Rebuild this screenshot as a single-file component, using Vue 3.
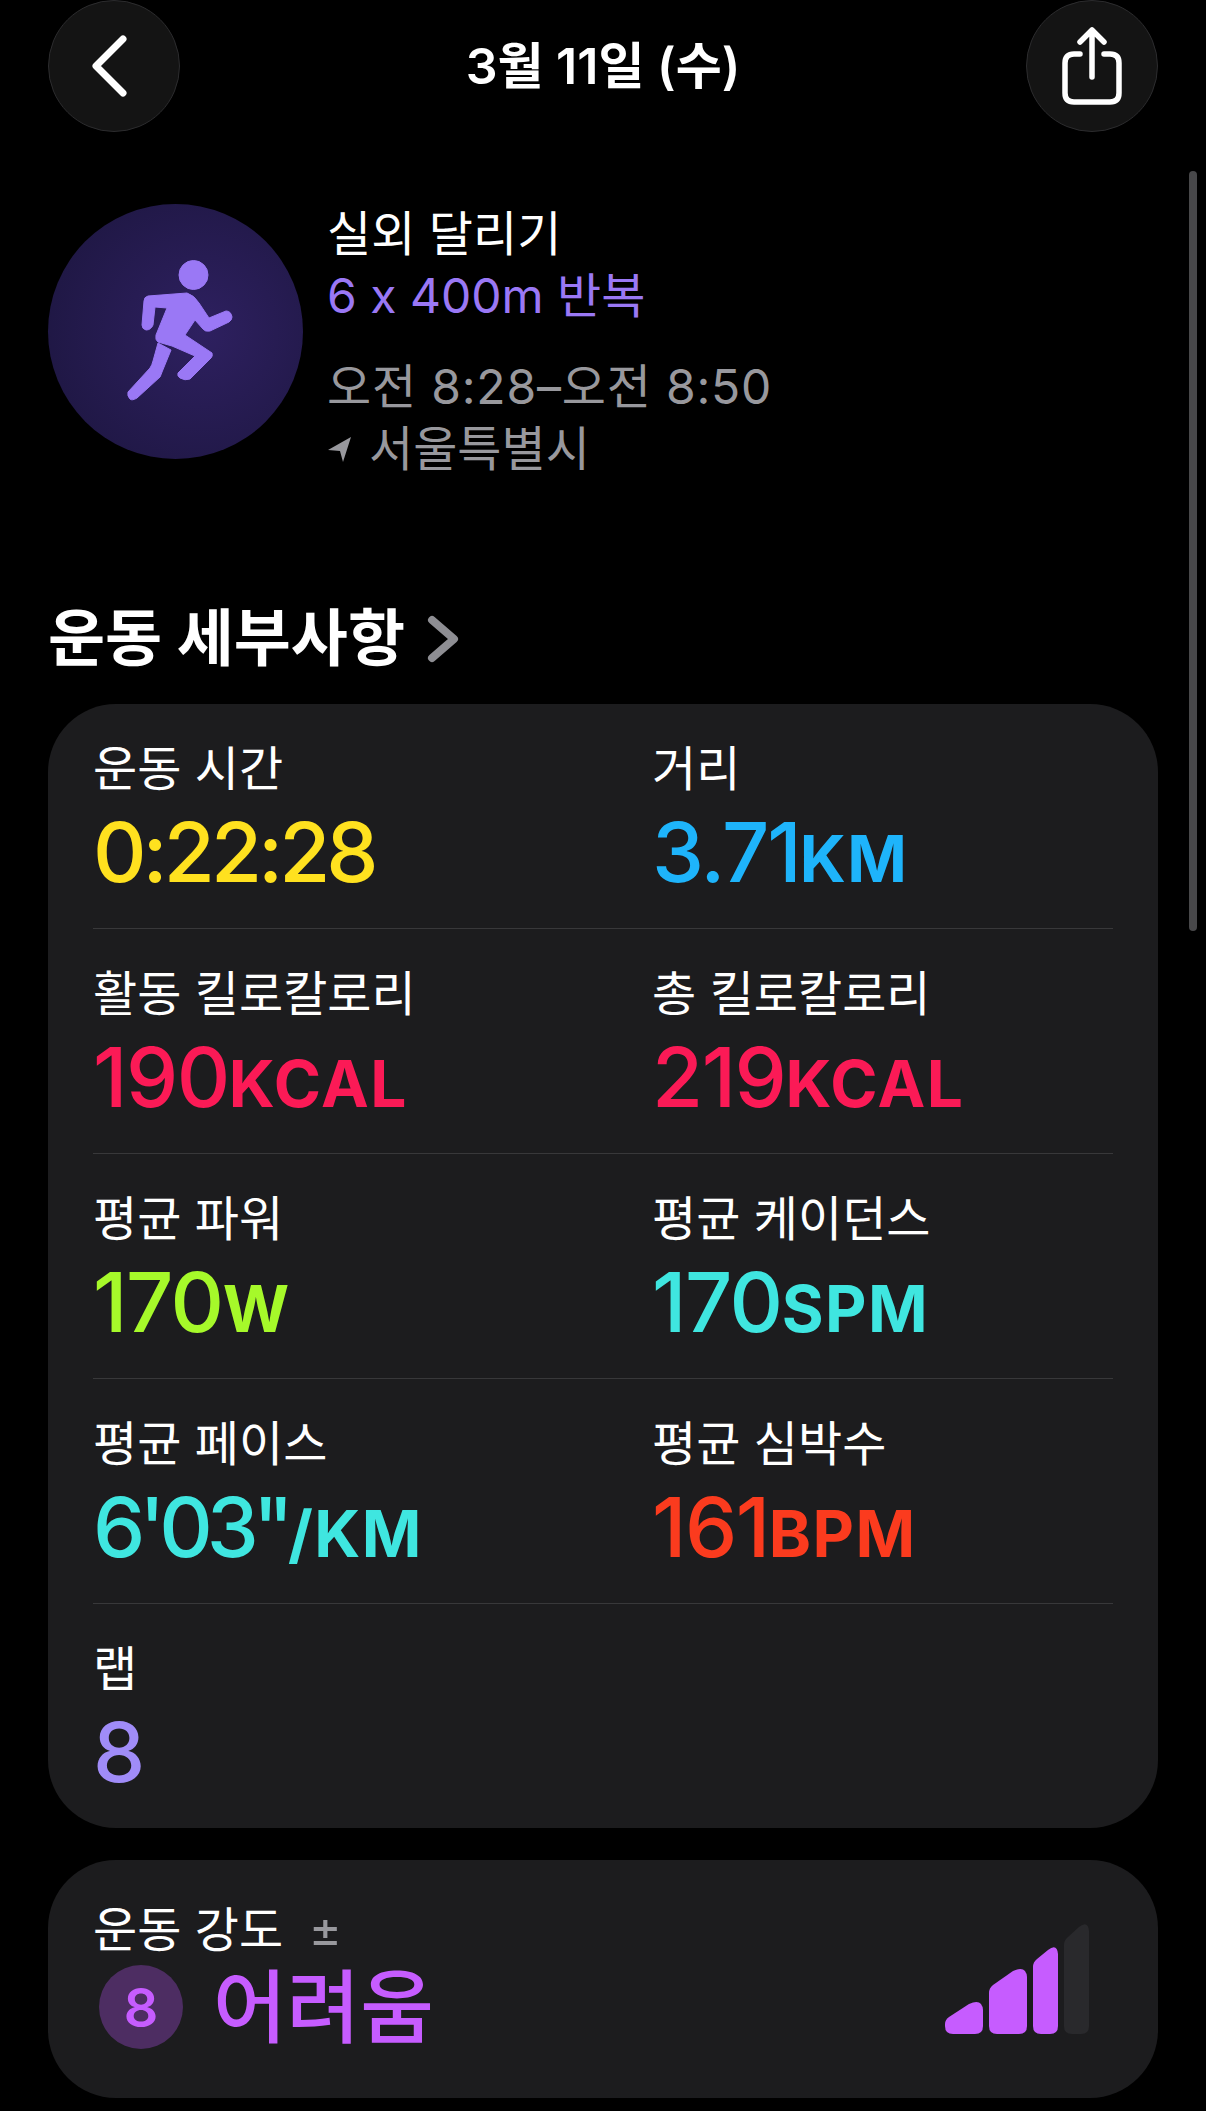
<script setup>
const stats = [
  { label: '운동 시간', value: '0:22:28', unit: '', color: '#ffe11f', tight: -4 },
  { label: '거리', value: '3.71', unit: 'KM', color: '#1eb4fb', tight: -2 },
  { label: '활동 킬로칼로리', value: '190', unit: 'KCAL', color: '#fb1a56', tight: -1.5 },
  { label: '총 킬로칼로리', value: '219', unit: 'KCAL', color: '#fb1a56', tight: -1.5 },
  { label: '평균 파워', value: '170', unit: 'W', color: '#a6f92a', tight: -1.5 },
  { label: '평균 케이던스', value: '170', unit: 'SPM', color: '#3fe6e0', tight: -1.5 },
  { label: '평균 페이스', value: `6'03"`, unit: '/KM', color: '#3fe6e0', tight: -6 },
  { label: '평균 심박수', value: '161', unit: 'BPM', color: '#fb3b1e', tight: -1.5 },
  { label: '랩', value: '8', unit: '', color: '#a08cf8', tight: -1 },
]
</script>

<template>
  <div class="page">
    <header class="nav">
      <button class="round">
        <svg class="back" width="40" height="62" viewBox="0 0 40 62" fill="none" stroke="#fff" stroke-width="7" stroke-linecap="round" stroke-linejoin="round"><path d="M33 4 6 31l27 27" /></svg>
      </button>
      <div class="date">3월 11일 (수)</div>
      <button class="round">
        <svg width="64" height="78" viewBox="0 0 64 78" fill="none" stroke="#fff" stroke-width="5.5" stroke-linecap="round" stroke-linejoin="round"><path d="M32 50V4M20 15 32 3l12 12" /><path d="M20 27h-6q-9 0-9 9v30q0 9 9 9h36q9 0 9-9V36q0-9-9-9h-6" /></svg>
      </button>
    </header>

    <section class="summary">
      <div class="badge">
        <svg width="121" height="153" viewBox="115 255 121 153" fill="#9a78f5" stroke="#9a78f5" stroke-width="1" stroke-linejoin="round">
          <ellipse cx="193.5" cy="275" rx="14.5" ry="14.5" />
          <path d="M148 296 187 293Q194 295 199 303L209 318 226 311Q231 311 232 317 232 320 229 322L210 331Q205 332 203 329L195 320 185 335 212 353Q213 356 211 358L190 379Q185 381 180 378 177 376 178 373L195 356 172 346 158 342Q155 340 156 335L167 308 155 307 153 325Q151 330 146 330 142 329 142 325L144 301Q144 297 148 296Z" />
          <path d="M158 343 171 350 162 372Q161 375 160 377L137 398Q132 401 130 399 127 396 128 392L150 368Q152 365 153 361Z" />
        </svg>
      </div>
      <div class="info">
        <div class="line white">실외 달리기</div>
        <div class="line purple">6 x 400m 반복</div>
        <div class="line gray gap time">오전 8:28–오전 8:50</div>
        <div class="line gray loc">
          <svg width="26" height="28" viewBox="0 0 26 28" fill="#98989d"><path d="M24 2 1 15l12 1 3 11Z" /></svg>
          서울특별시
        </div>
      </div>
    </section>

    <h2 class="heading">
      운동 세부사항
      <svg width="32" height="48" viewBox="0 0 32 48" fill="none" stroke="#8e8e93" stroke-width="8" stroke-linecap="round" stroke-linejoin="round"><path d="M5 5 27 24 5 43" /></svg>
    </h2>

    <section class="card stats">
      <div v-for="s in stats" :key="s.label" class="stat">
        <div class="label">{{ s.label }}</div>
        <div class="value" :style="{ color: s.color, letterSpacing: s.tight + 'px' }">{{ s.value }}<span class="unit">{{ s.unit }}</span></div>
      </div>
    </section>

    <section class="card effort">
      <div>
        <div class="label">운동 강도 <span class="pm">±</span></div>
        <div class="level">
          <span class="num">8</span>
          <span class="word">어려움</span>
        </div>
      </div>
      <svg class="bars" width="144" height="111" viewBox="0 0 144 111">
        <path d="M0 101q0-4 4-7L24 81q13-6 14 6v16q0 8-8 8H8q-8 0-8-8Z" fill="#c65cff" />
        <path d="M44 70q0-5 4-8L68 48q13-6 14 6v49q0 8-8 8H52q-8 0-8-8Z" fill="#c65cff" />
        <path d="M88 44q0-5 4-8L103 27q9-7 10 4v72q0 8-8 8h-9q-8 0-8-8Z" fill="#c65cff" />
        <path d="M119 22q0-5 4-8L134 4q9-7 10 4v95q0 8-8 8h-9q-8 0-8-8Z" fill="#29292c" />
      </svg>
    </section>

    <div class="scrollbar"></div>
  </div>
</template>

<style scoped>
.page {
  position: relative;
  width: 1206px;
  height: 2111px;
  overflow: hidden;
  background: #000;
  color: #fff;
  font-family: Inter, "Noto Sans CJK KR", sans-serif;
  font-feature-settings: "calt" 0;
  box-sizing: border-box;
  padding: 0 48px;
}
.nav { display: flex; align-items: center; justify-content: space-between; height: 132px; }
.round {
  width: 132px;
  height: 132px;
  border-radius: 50%;
  border: 1.5px solid #2c2c2e;
  background: #141414;
  display: grid;
  place-items: center;
  padding: 0;
}
.back { margin-right: 8px; }
.date { font-size: 50px; font-weight: 600; margin-bottom: 8px; }
.summary { display: flex; gap: 24px; margin-top: 72px; height: 268px; }
.badge {
  width: 255px;
  height: 255px;
  border-radius: 50%;
  background: radial-gradient(circle at 60% 50%, #2e2060, #201846 75%, #1a1538);
  display: grid;
  place-items: center;
  flex: none;
}
.info { font-size: 48px; margin-top: -1px; }
.line { height: 62px; line-height: 62px; white-space: nowrap; }
.white { color: #fff; }
.purple { color: #9a78f5; }
.gray { color: #98989d; }
.gap { margin-top: 29px; }
.time { letter-spacing: .8px; }
.loc { display: flex; align-items: center; gap: 16px; }
.heading {
  margin: 0;
  margin-top: 131px;
  height: 72px;
  display: flex;
  align-items: center;
  gap: 22px;
  font-size: 62px;
  font-weight: 700;
  line-height: 72px;
}
.card { background: #1c1c1e; border-radius: 68px; width: 1110px; box-sizing: border-box; }
.stats {
  margin-top: 29px;
  height: 1124px;
  padding: 0 45px;
  display: grid;
  grid-template-columns: 559px 1fr;
  grid-auto-rows: 225px;
  align-content: start;
}
.stat { border-bottom: 1.5px solid #38383a; padding-top: 34px; box-sizing: border-box; }
.stat:nth-child(10n + 9) { border-bottom: 0; }
.label { font-size: 48px; line-height: 62px; white-space: nowrap; }
.value { font-size: 83px; font-weight: 550; line-height: 98px; margin-top: 3px; white-space: nowrap; }
.unit { font-size: 64px; font-weight: 700; letter-spacing: 1.5px; }
.effort {
  margin-top: 32px;
  height: 238px;
  padding: 38px 69px 0 45px;
  display: flex;
  justify-content: space-between;
  align-items: flex-start;
}
.pm { color: #98989d; font-size: 50px; margin-left: 12px; }
.level { display: flex; align-items: center; gap: 30px; margin-left: 6px; margin-top: -2px; }
.num {
  width: 84px;
  height: 84px;
  border-radius: 50%;
  background: #4d2d62;
  color: #c65cff;
  display: grid;
  place-items: center;
  font-size: 54px;
  font-weight: 600;
}
.word { color: #c65cff; font-size: 80px; font-weight: 500; line-height: 96px; }
.bars { margin-top: 25px; }
.scrollbar {
  position: absolute;
  right: 9px;
  top: 171px;
  width: 8px;
  height: 760px;
  border-radius: 4px;
  background: #48484a;
}
</style>
